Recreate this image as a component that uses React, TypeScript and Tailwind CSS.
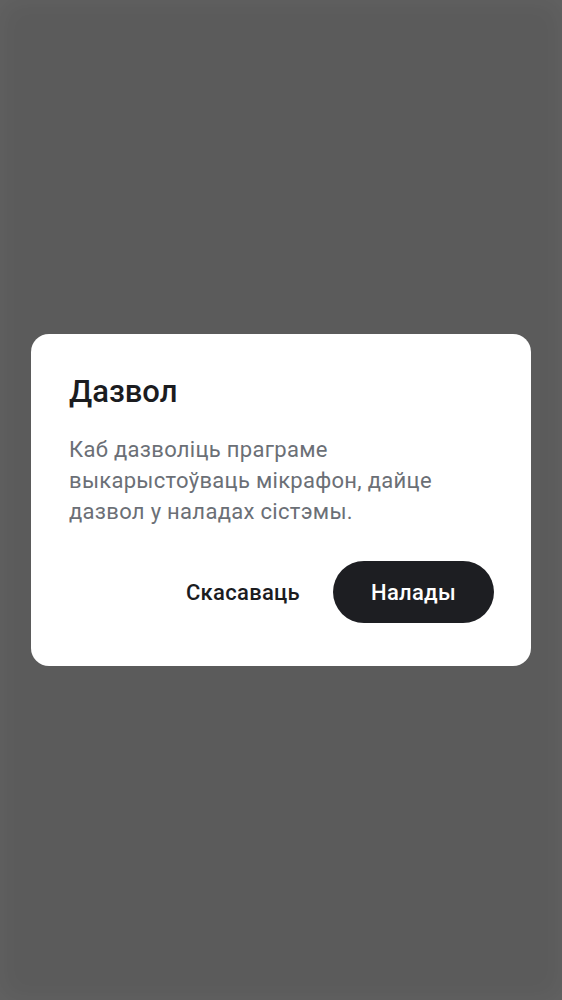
export default function App() {
    // Дыялог дазволу на мікрафон па-над зацемненым фонам
    return (
        <div
            className="min-h-screen w-full flex items-center justify-center bg-[#5b5b5b] shadow-[inset_0_0_28px_rgba(255,255,255,0.05)] px-[31px]"
            style={{ fontFamily: "Roboto, 'Noto Sans', sans-serif" }}
        >
            <div className="w-full bg-white rounded-[18px] pt-[40px] pb-[43px] pl-[38px] pr-[37px]">
                <h2 className="text-[31px] leading-[36px] font-medium text-[#1b1c1f]">Дазвол</h2>
                <p className="mt-[24px] text-[22px] leading-[31px] tracking-[0.3px] text-[#6b6f76]">
                    Каб дазволіць праграме выкарыстоўваць мікрафон, дайце дазвол у наладах сістэмы.
                </p>
                <div className="mt-[34px] flex items-center justify-end gap-[33px]">
                    <button className="text-[22px] font-medium tracking-[0.3px] text-[#1b1c1f]">Скасаваць</button>
                    <button className="h-[62px] w-[161px] rounded-full bg-[#1d1e22] text-white text-[22px] font-medium tracking-[0.3px]">
                        Налады
                    </button>
                </div>
            </div>
        </div>
    );
}
